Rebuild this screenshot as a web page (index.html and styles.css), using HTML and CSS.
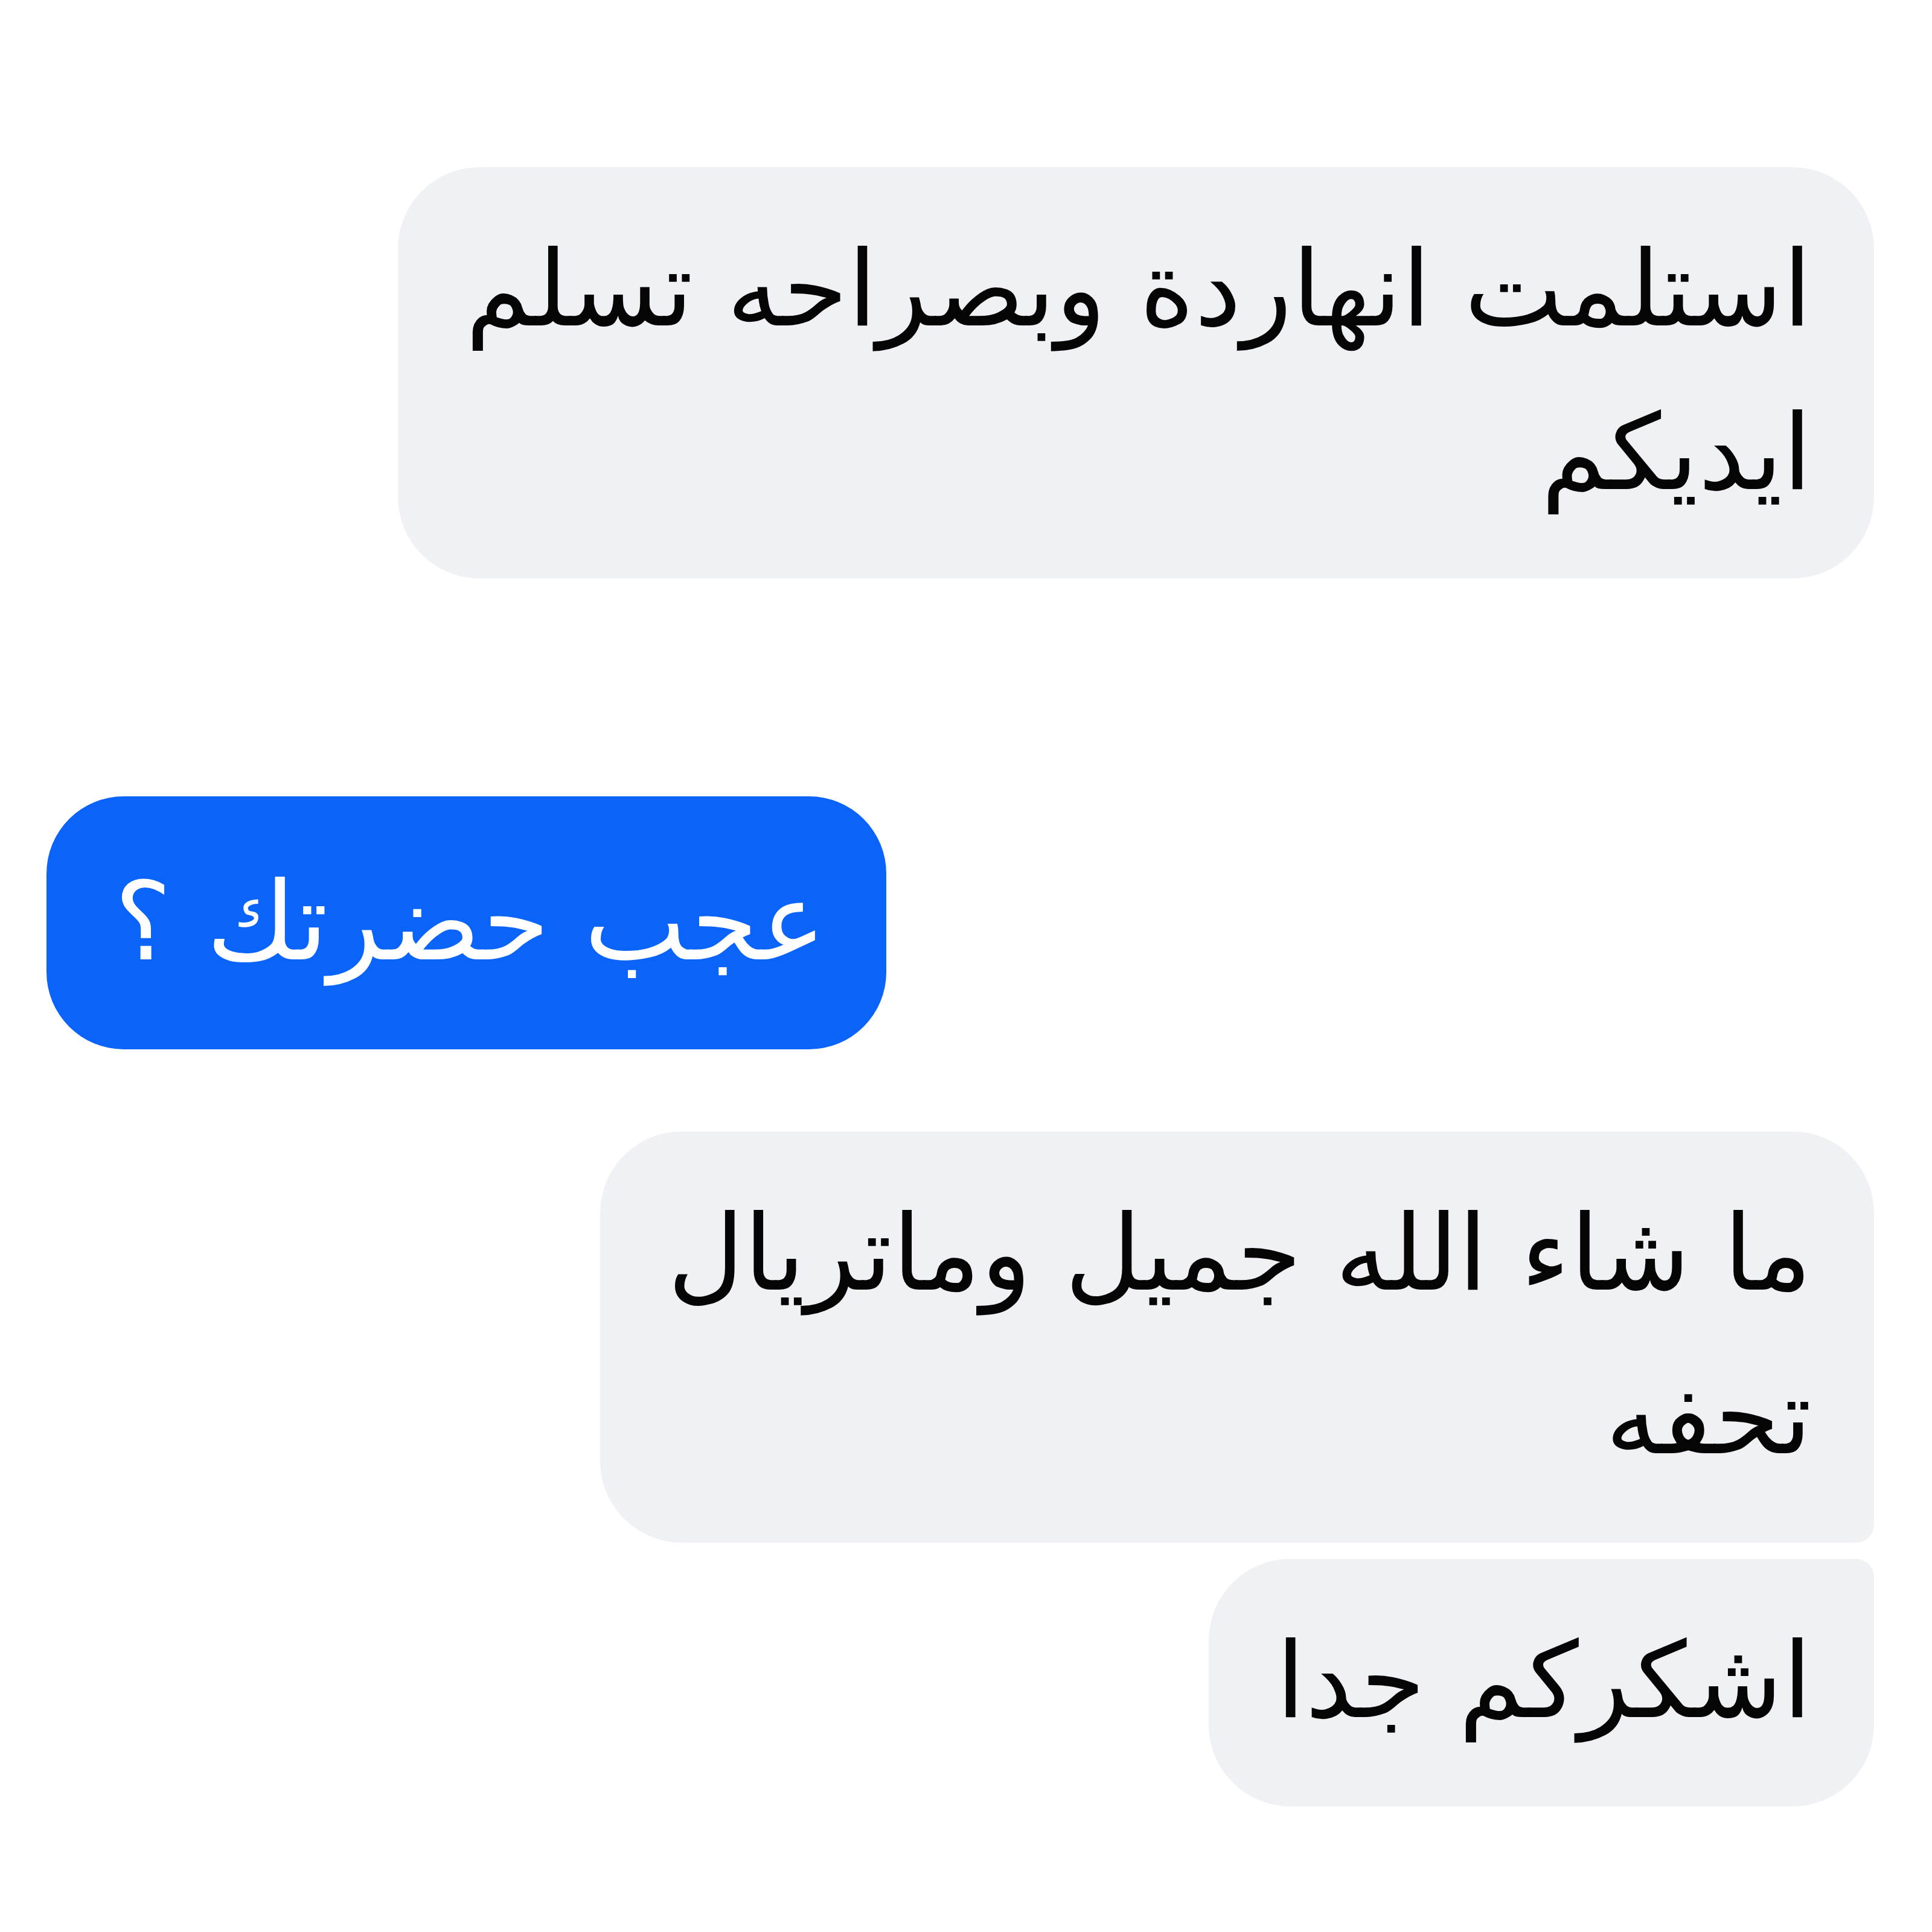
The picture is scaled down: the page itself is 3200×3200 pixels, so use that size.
FILE: index.html
```html
<!DOCTYPE html>
<html dir="rtl">
<head>
<meta charset="utf-8">
<link rel="stylesheet" href="styles.css">
</head>
<body>
<main class="thread">
  <div class="row row-in">
    <div class="bubble bubble-in">استلمت انهاردة وبصراحه تسلم<br>ايديكم</div>
  </div>
  <div class="row row-out">
    <div class="bubble bubble-out">عجب حضرتك ؟</div>
  </div>
  <div class="row row-in row-group-start">
    <div class="bubble bubble-in bubble-top">ما شاء الله جميل وماتريال<br>تحفه</div>
  </div>
  <div class="row row-in row-group-next">
    <div class="bubble bubble-in bubble-bottom">اشكركم جدا</div>
  </div>
</main>
</body>
</html>
```

FILE: styles.css
```css
html, body {
  margin: 0;
  padding: 0;
  background: #ffffff;
}
body {
  width: 3200px;
  height: 3200px;
  font-family: "DejaVu Sans", sans-serif;
}
.thread {
  display: flex;
  flex-direction: column;
  padding: 277px 96px 0 77px;
}
.row {
  display: flex;
  justify-content: flex-start;
}
.row-out {
  justify-content: flex-end;
  margin-top: 361px;
}
.row-group-start {
  margin-top: 136px;
}
.row-group-next {
  margin-top: 27px;
}
.bubble {
  font-size: 174px;
  line-height: 271px;
  padding: 66px 103px 73px 112px;
  white-space: nowrap;
  border-radius: 135px;
  color: #050505;
}
.bubble-in {
  background: #f0f1f5;
}
.bubble-out {
  background: #0a64fa;
  color: #ffffff;
  font-size: 180px;
  line-height: 271px;
  padding: 72px 100px 76px 112px;
  border-radius: 128px;
}
.bubble-top {
  border-bottom-right-radius: 30px;
}
.bubble-bottom {
  border-top-right-radius: 30px;
}
```
